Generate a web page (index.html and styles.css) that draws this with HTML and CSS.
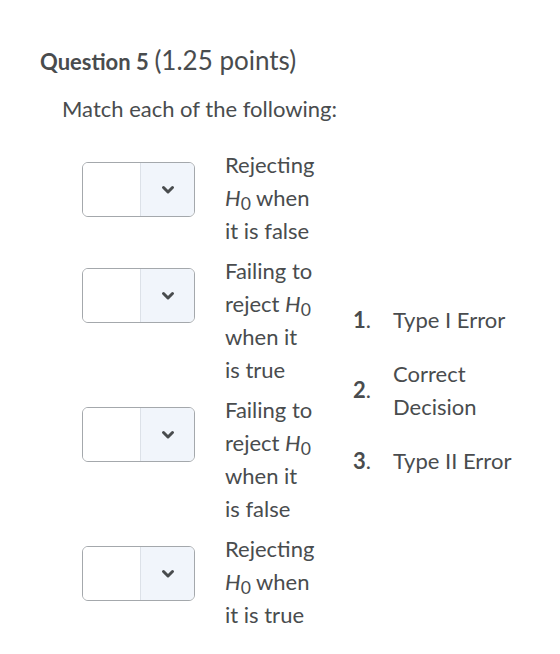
FILE: index.html
```html
<!DOCTYPE html>
<html lang="en">
<head>
    <meta charset="UTF-8">
    <meta name="viewport" content="width=device-width, initial-scale=1.0">
    <title>Question 5</title>

    <link rel="stylesheet" href="styles.css">

</head>
<body>
    <main class="question">
        <h1 class="title"><strong>Question 5</strong> <span class="points">(1.25 points)</span></h1>
        <p class="prompt">Match each of the following:</p>

        <section class="match">
            <div class="choices">
                <div class="choice">
                    <div class="select">
                        <span class="select-value"></span>
                        <span class="select-btn">
                            <svg width="14" height="10" viewBox="0 0 14 10"><path d="M2.5 2.5 L7 7 L11.5 2.5" fill="none" stroke="#494c4e" stroke-width="3" stroke-linecap="round" stroke-linejoin="round"/></svg>
                        </span>
                    </div>
                    <p class="choice-text">Rejecting <span class="h0"><i>H</i><sub>0</sub></span> when it is false</p>
                </div>
                <div class="choice">
                    <div class="select">
                        <span class="select-value"></span>
                        <span class="select-btn">
                            <svg width="14" height="10" viewBox="0 0 14 10"><path d="M2.5 2.5 L7 7 L11.5 2.5" fill="none" stroke="#494c4e" stroke-width="3" stroke-linecap="round" stroke-linejoin="round"/></svg>
                        </span>
                    </div>
                    <p class="choice-text">Failing to reject <span class="h0"><i>H</i><sub>0</sub></span> when it is true</p>
                </div>
                <div class="choice">
                    <div class="select">
                        <span class="select-value"></span>
                        <span class="select-btn">
                            <svg width="14" height="10" viewBox="0 0 14 10"><path d="M2.5 2.5 L7 7 L11.5 2.5" fill="none" stroke="#494c4e" stroke-width="3" stroke-linecap="round" stroke-linejoin="round"/></svg>
                        </span>
                    </div>
                    <p class="choice-text">Failing to reject <span class="h0"><i>H</i><sub>0</sub></span> when it is false</p>
                </div>
                <div class="choice">
                    <div class="select">
                        <span class="select-value"></span>
                        <span class="select-btn">
                            <svg width="14" height="10" viewBox="0 0 14 10"><path d="M2.5 2.5 L7 7 L11.5 2.5" fill="none" stroke="#494c4e" stroke-width="3" stroke-linecap="round" stroke-linejoin="round"/></svg>
                        </span>
                    </div>
                    <p class="choice-text">Rejecting <span class="h0"><i>H</i><sub>0</sub></span> when it is true</p>
                </div>
            </div>

            <ol class="answers">
                <li><span class="num"><b>1</b>.</span><span>Type I Error</span></li>
                <li><span class="num"><b>2</b>.</span><span>Correct Decision</span></li>
                <li><span class="num"><b>3</b>.</span><span>Type II Error</span></li>
            </ol>
        </section>
    </main>
</body>
</html>
```

FILE: styles.css
```css
html{
    box-sizing: border-box;
    font-family: Lato, "Open Sans", sans-serif;
    font-size: 22px;
}

*, *::after, *::before{
    box-sizing: inherit;
}

body{
    margin: 0;
    color: #494c4e;
    background-color: #fff;
}

.question{
    padding: 45px 0 0 40px;
}

.title{
    margin: 0;
    font-size: 22px;
    font-weight: 400;
    line-height: 33px;
}

.title strong{
    font-weight: 700;
}

.points{
    font-size: 26px;
    line-height: 1;
}

.prompt{
    margin: 14px 0 0 22px;
    line-height: 33px;
}

.match{
    display: flex;
    align-items: center;
    margin-top: 23px;
    padding-left: 42px;
}

.choices{
    display: flex;
    flex-direction: column;
    gap: 7px;
}

.choice{
    display: flex;
    align-items: flex-start;
    gap: 30px;
}

.select{
    display: flex;
    width: 113px;
    height: 55px;
    margin-top: 14px;
    border: 1px solid #a4a8ac;
    border-radius: 6px;
    overflow: hidden;
}

.select-value{
    width: 57px;
    background-color: #fff;
}

.select-btn{
    display: flex;
    flex-grow: 1;
    justify-content: center;
    align-items: center;
    background-color: #f1f5fb;
    border-left: 1px solid #dce1e8;
}

.choice-text{
    width: 90px;
    margin: 0;
    line-height: 33px;
}

.h0 i{
    font-style: italic;
}

.h0 sub{
    font-size: 0.8em;
    line-height: 0;
    vertical-align: -0.22em;
}

.answers{
    display: flex;
    flex-direction: column;
    gap: 21px;
    margin: 0 0 0 38px;
    padding: 0;
    list-style: none;
}

.answers li{
    display: grid;
    grid-template-columns: 40px 124px;
    align-items: center;
    line-height: 33px;
}

.num b{
    font-weight: 700;
}
```
